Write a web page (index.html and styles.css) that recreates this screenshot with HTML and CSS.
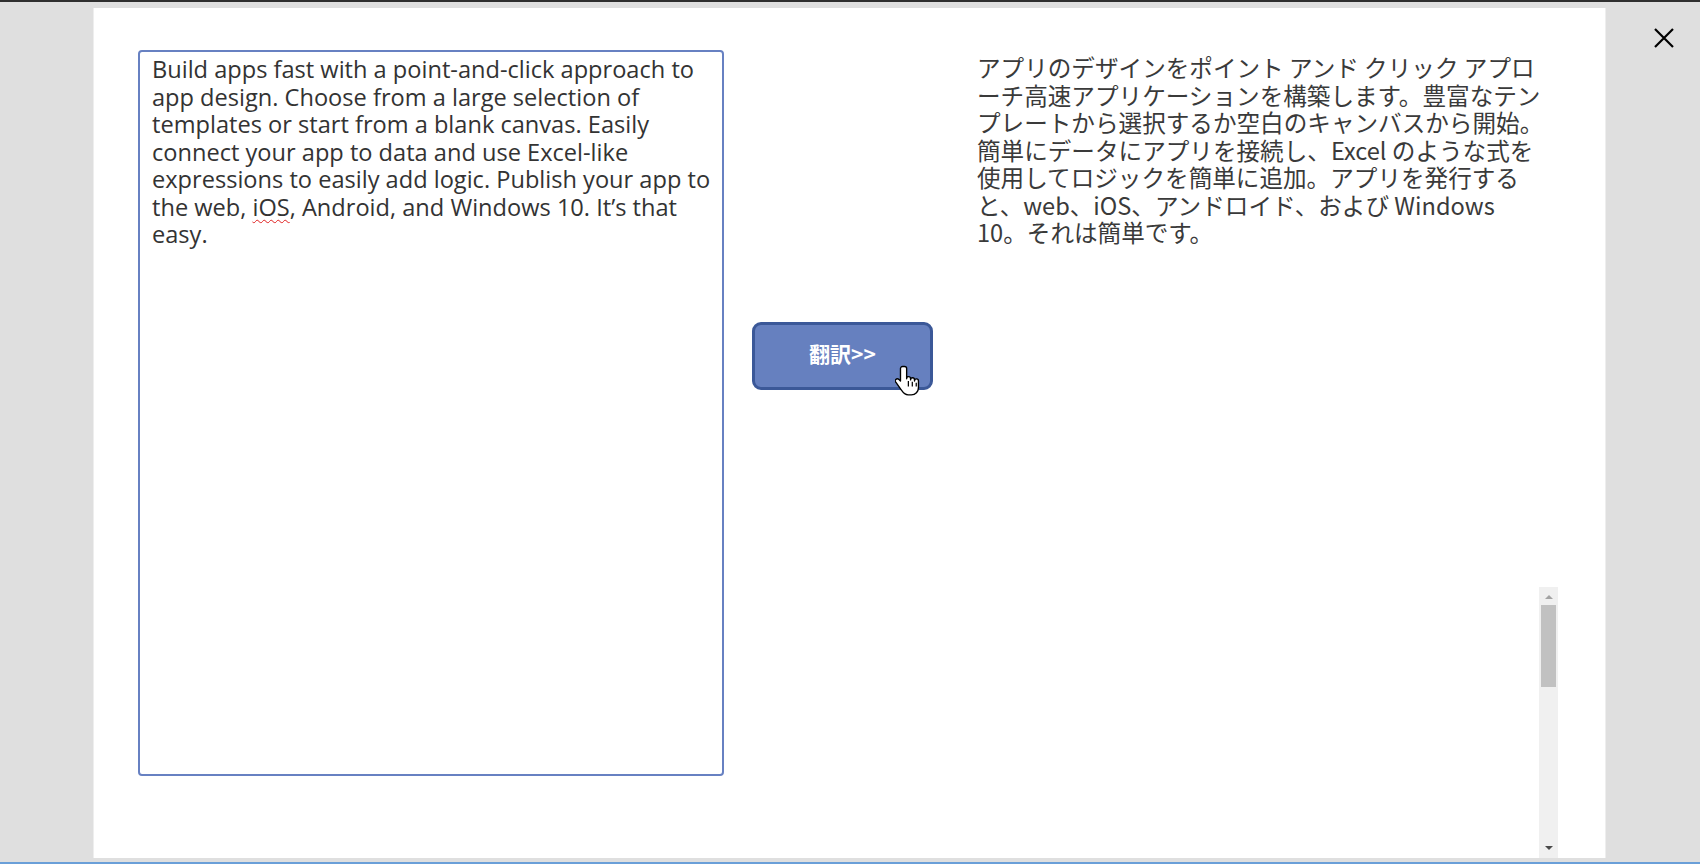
FILE: index.html
```html
<!DOCTYPE html>
<html lang="ja">
<head>
<meta charset="utf-8">
<title>翻訳</title>
<link rel="stylesheet" href="styles.css">
</head>
<body>
<div class="screen">
  <div class="topbar"></div>
  <div class="stage">
    <div class="panel">
      <div class="input-box">
        <p class="input-text">Build apps fast with a point-and-click approach to app design. Choose from a large selection of templates or start from a blank canvas. Easily connect your app to data and use Excel-like expressions to easily add logic. Publish your app to the web, <span class="spell">iOS</span>, Android, and Windows 10. It’s that easy.</p>
      </div>
      <div class="action-col">
        <button class="translate-btn" type="button">翻訳&gt;&gt;
          <svg class="cursor" viewBox="0 0 20 26" width="25" height="32" aria-hidden="true">
            <path d="M6 1.2c-1 0-1.7.8-1.7 1.7v10.2l-1.2-1.3c-.7-.7-1.9-.8-2.6-.1-.6.6-.6 1.6 0 2.3l4.4 6.3c1.3 1.9 3.2 4 5.6 4h2.6c3.4 0 5.8-2.6 5.8-6v-5.3c0-1-.7-1.7-1.6-1.7-.9 0-1.6.7-1.6 1.7v-.9c0-1-.7-1.7-1.6-1.7-.9 0-1.6.7-1.6 1.7v-.9c0-1-.7-1.7-1.6-1.7-.9 0-1.6.7-1.6 1.7V2.9c0-.9-.6-1.7-1.7-1.7z" fill="#fff" stroke="#000" stroke-width="1.1" stroke-linejoin="round"/>
            <path d="M10.7 13v4.5M13.9 13.6v3.9M17.1 14.4v3.1" stroke="#000" stroke-width="1" fill="none"/>
          </svg>
        </button>
      </div>
      <div class="output-col">
        <p class="output-text">アプリのデザインをポイント アンド クリック アプローチ高速アプリケーションを構築します。豊富なテンプレートから選択するか空白のキャンバスから開始。簡単にデータにアプリを接続し、Excel のような式を使用してロジックを簡単に追加。アプリを発行すると、web、iOS、アンドロイド、および Windows 10。それは簡単です。</p>
        <div class="scrollbar">
          <span class="arrow-up"></span>
          <span class="thumb"></span>
          <span class="track-space"></span>
          <span class="arrow-down"></span>
        </div>
      </div>
    </div>
    <div class="close-area">
      <svg class="close-icon" viewBox="0 0 20 20" width="20" height="20" aria-label="閉じる">
        <path d="M1 1L19 19M19 1L1 19" stroke="#000" stroke-width="2.2" fill="none"/>
      </svg>
    </div>
  </div>
  <div class="bottom-gap"></div>
  <div class="bottom-line"></div>
</div>
</body>
</html>
```
FILE: styles.css
```css
html, body {
  margin: 0;
  padding: 0;
}
body {
  background: #dfdfdf;
  font-family: "Open Sans", "Noto Sans CJK JP", sans-serif;
  color: #333;
}
.screen {
  width: 1700px;
  height: 864px;
  display: flex;
  flex-direction: column;
  overflow: hidden;
}
.topbar {
  height: 2px;
  background: #2f2f2f;
}
.stage {
  display: flex;
  padding-top: 6px;
  padding-left: 93px;
  height: 850px;
}
.panel {
  width: 1513px;
  height: 850px;
  box-sizing: border-box;
  background: #fff;
  border-left: 1px solid #eeeeee;
  border-right: 1px solid #eeeeee;
  padding: 42px 0 0 44px;
  display: flex;
  align-items: flex-start;
}
.input-box {
  width: 586px;
  height: 726px;
  box-sizing: border-box;
  border: 2px solid #6781c2;
  border-radius: 4px;
  padding: 4px 4px 0 12px;
}
.input-text {
  margin: 0;
  font-size: 23.6px;
  line-height: 27.5px;
  color: #333;
}
.spell {
  text-decoration: underline wavy #e02020;
  text-decoration-thickness: 1px;
  text-underline-offset: 3px;
}
.action-col {
  margin-left: 28px;
  padding-top: 272px;
}
.translate-btn {
  position: relative;
  width: 181px;
  height: 68px;
  box-sizing: border-box;
  background: #6680bf;
  border: 3px solid #3b5898;
  border-radius: 9px;
  color: #fff;
  font-family: "Noto Sans CJK JP", sans-serif;
  font-weight: 700;
  font-size: 21px;
  line-height: 1;
  padding: 0 0 5px 0;
  cursor: pointer;
}
.cursor {
  position: absolute;
  left: 140px;
  top: 40px;
}
.output-col {
  margin-left: 44px;
  width: 581px;
  align-self: stretch;
  display: flex;
  flex-direction: column;
  justify-content: space-between;
}
.output-text {
  margin: 4px 0 0 0;
  width: 568px;
  font-family: "Noto Sans CJK JP", sans-serif;
  font-size: 23.6px;
  line-height: 27.5px;
  color: #3a3a3a;
}
.scrollbar {
  align-self: flex-end;
  width: 19px;
  height: 271px;
  background: #f0f0f0;
  display: flex;
  flex-direction: column;
  align-items: center;
}
.arrow-up {
  margin-top: 8px;
  width: 0;
  height: 0;
  border-left: 4px solid transparent;
  border-right: 4px solid transparent;
  border-bottom: 4px solid #a3a3a3;
}
.thumb {
  margin-top: 6px;
  width: 15px;
  height: 82px;
  background: #c1c1c1;
}
.track-space {
  flex: 1;
}
.arrow-down {
  margin-bottom: 8px;
  width: 0;
  height: 0;
  border-left: 4px solid transparent;
  border-right: 4px solid transparent;
  border-top: 4px solid #4a4a4a;
}
.close-area {
  flex: 1;
  padding-top: 20px;
  padding-left: 48px;
}
.close-icon {
  display: block;
}
.bottom-gap {
  height: 4px;
}
.bottom-line {
  height: 2px;
  background: #6a9fd8;
}
```
